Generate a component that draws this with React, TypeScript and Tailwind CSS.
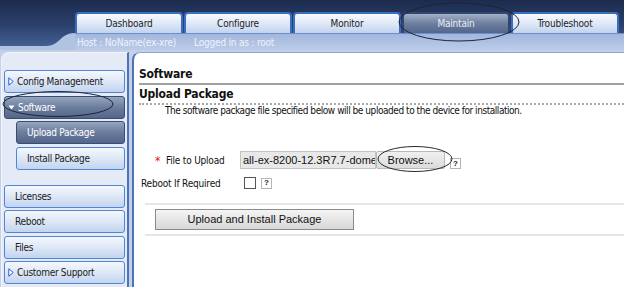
import React from "react";

const Tri = ({ down, light }: { down?: boolean; light?: boolean }) =>
  down ? (
    <svg width="7" height="7" viewBox="0 0 7 7" className="shrink-0">
      <path d="M0.5 1.5 L6.5 1.5 L3.5 5.5 Z" fill={light ? "#ffffff" : "#2a5bd0"} />
    </svg>
  ) : (
    <svg width="6" height="9" viewBox="0 0 6 9" className="shrink-0">
      <path d="M0.8 0.8 L5.2 4.5 L0.8 8.2 Z" fill="#ffffff" stroke="#2a5bd0" strokeWidth="1" />
    </svg>
  );

const SideItem = ({
  label,
  sel,
  indent,
  icon,
}: {
  label: string;
  sel?: boolean;
  indent?: boolean;
  icon?: "right" | "down";
}) => (
  <div
    className={
      "h-[23px] flex items-center gap-[3px] rounded-[3px] border text-[10px] tracking-[-0.3px] " +
      (indent ? "ml-[12px] pl-[10px] " : icon ? "pl-[3px] " : "pl-[10px] ") +
      (sel
        ? "border-[#3b4d70] bg-gradient-to-b from-[#97a6be] via-[#6b7d9d] to-[#53668a] text-white"
        : "border-[#4f86d6] bg-gradient-to-b from-[#f5f8fd] via-[#dde7f6] to-[#c3d4ef] text-[#1b1b1b]")
    }
  >
    {icon === "right" && <Tri />}
    {icon === "down" && <Tri down light />}
    <span>{label}</span>
  </div>
);

const Tab = ({ label, active }: { label: string; active?: boolean }) => (
  <div
    className={
      "w-[108px] h-[21px] flex items-center justify-center rounded-t-[4px] border-[2px] border-b-0 text-[10px] tracking-[-0.2px] " +
      (active
        ? "border-[#33466d] bg-gradient-to-b from-[#a3b1c7] via-[#6d7f9f] to-[#53668b] text-[#e9eef6]"
        : "border-[#3a6cc0] bg-gradient-to-b from-[#f7faff] via-[#dfe8f7] to-[#c2d3ef] text-[#1e1e1e]")
    }
  >
    {label}
  </div>
);

const Help = () => (
  <div className="w-[11px] h-[11px] border border-[#b5b5b5] bg-white flex items-center justify-center text-[8px] font-bold leading-none text-[#222] font-['Liberation_Sans',sans-serif]">
    ?
  </div>
);

export default function App() {
  return (
    <div className="relative w-[624px] h-[287px] overflow-hidden bg-[#c3d0e8] font-['DejaVu_Sans_Condensed','Liberation_Sans',sans-serif]">
      {/* header */}
      <div className="bg-gradient-to-b from-[#1c2b4d] via-[#2b416c] to-[#4a649a]">
        <div className="h-[12px]" />
        <div className="flex h-[21px] gap-[1px]">
          <div className="w-[74px]" />
          <Tab label="Dashboard" />
          <Tab label="Configure" />
          <Tab label="Monitor" />
          <Tab label="Maintain" active />
          <Tab label="Troubleshoot" />
        </div>
        <div className="flex h-[17px]">
          <svg width="75" height="17" viewBox="0 0 75 17" className="shrink-0">
            <path d="M0 13 L46 13 C60 13 60 0 75 0 L75 17 L0 17 Z" fill="#b1c3e3" />
          </svg>
          <div className="flex-1 flex items-center gap-[18px] pl-[2px] text-[10px] tracking-[-0.2px] text-[#eef3fb] bg-gradient-to-b from-[#a2b7de] to-[#bccbe8] border-t border-[#6f8fc8]">
            <span>Host : NoName(ex-xre)</span>
            <span>Logged in as : root</span>
          </div>
        </div>
      </div>

      {/* body */}
      <div className="flex pt-[2px] h-[237px]">
        <div className="w-[128px] ml-[1px] rounded-tl-[8px] border-l border-t border-[#f2f6fc] border-r-[2px] border-r-[#4d73b8] bg-[#e4ebf6] pt-[17px] pl-[2px] pr-[2px] flex flex-col gap-[2.5px]">
          <SideItem label="Config Management" icon="right" />
          <SideItem label="Software" icon="down" sel />
          <SideItem label="Upload Package" indent sel />
          <SideItem label="Install Package" indent />
          <div className="h-[10px]" />
          <SideItem label="Licenses" />
          <SideItem label="Reboot" />
          <SideItem label="Files" />
          <SideItem label="Customer Support" icon="right" />
        </div>
        <div className="flex-1 ml-[3px] bg-white rounded-tl-[8px] border-l-[2px] border-t border-[#4d73b8] border-t-[#8aa4d4] pl-[5px] pt-[13px]">
          <div className="text-[12px] font-bold tracking-[-0.2px] text-[#111] leading-[16px] pb-[1px] border-b-[2px] border-[#a0a0a0]">
            Software
          </div>
          <div className="mt-[1px] text-[12px] font-bold tracking-[-0.2px] text-[#111] leading-[16px] pb-[1px] border-b-[2px] border-dotted border-[#a8a8a8]">
            Upload Package
          </div>
          <div className="pl-[26px] text-[10px] tracking-[-0.45px] text-[#111] leading-[12px] whitespace-nowrap">
            The software package file specified below will be uploaded to the device for installation.
          </div>

          <div className="mt-[34px] flex items-center h-[18px]">
            <span className="w-[27px] pl-[16px] text-[#e02020] text-[12px] leading-none pt-[2px]">*</span>
            <span className="w-[74px] text-[10px] tracking-[-0.2px] text-[#111]">File to Upload</span>
            <div className="w-[136px] h-[18px] bg-[#e8e8e8] border border-[#c4c4c4] flex items-center pl-[2px] text-[11px] text-[#111] font-['Liberation_Sans',sans-serif] overflow-hidden whitespace-nowrap">
              all-ex-8200-12.3R7.7-do<span className="inline-block w-[1px] h-[13px] bg-black" />me
            </div>
            <div className="w-[69px] h-[18px] bg-gradient-to-b from-[#f0f0f0] to-[#dcdcdc] border border-[#b8b8b8] rounded-[2px] flex items-center justify-center text-[11px] text-[#111] font-['Liberation_Sans',sans-serif]">
              Browse...
            </div>
            <div className="ml-[5px] self-end">
              <Help />
            </div>
          </div>

          <div className="mt-[6px] flex items-center h-[16px]">
            <span className="w-[105px] pl-[2px] text-[10px] tracking-[-0.2px] text-[#111]">Reboot If Required</span>
            <div className="w-[12px] h-[12px] border border-[#555] bg-white" />
            <div className="ml-[5px]">
              <Help />
            </div>
          </div>

          <div className="mt-[12px] ml-[6px] border-t-[2px] border-[#e6e6e6] pt-[4px] pb-[4px] pl-[10px] border-b-[2px] border-b-[#e6e6e6]">
            <div className="w-[199px] h-[21px] bg-gradient-to-b from-[#f4f4f4] to-[#d8d8d8] border border-[#8a8a8a] flex items-center justify-center text-[11px] text-[#111] font-['Liberation_Sans',sans-serif]">
              Upload and Install Package
            </div>
          </div>
        </div>
      </div>

      {/* hand-drawn ellipses */}
      <svg className="absolute left-0 top-0 pointer-events-none" width="624" height="287" viewBox="0 0 624 287">
        <ellipse cx="459" cy="22" rx="60" ry="19" fill="none" stroke="#1c2438" strokeWidth="1" />
        <ellipse cx="58" cy="104" rx="55" ry="12.5" fill="none" stroke="#1c2438" strokeWidth="1" />
        <ellipse cx="415" cy="159" rx="37" ry="12.5" fill="none" stroke="#2a2a2a" strokeWidth="1" />
      </svg>
    </div>
  );
}
